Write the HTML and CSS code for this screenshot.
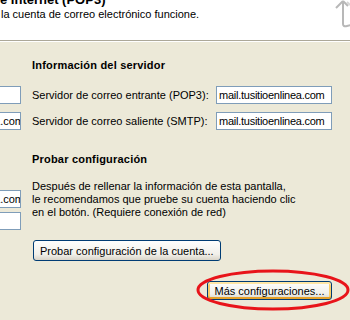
FILE: index.html
```html
<!DOCTYPE html>
<html lang="es">
<head>
<meta charset="utf-8">
<link rel="stylesheet" href="styles.css">
</head>
<body>
<div class="page">
  <header class="header">
    <div class="header-text">
      <div class="title">e Internet (POP3)</div>
      <div class="subtitle">la cuenta de correo electrónico funcione.</div>
    </div>
    <svg class="header-icon" width="18" height="28" viewBox="0 0 18 28">
      <path d="M10 1 L3 8 M10 1 L15 6 M10 1 L10 24 Q10 27 14 26 L18 25" fill="none" stroke="#b8b8b8" stroke-width="2"/>
      <path d="M14 2 L17 5" stroke="#d6d6d6" stroke-width="2"/>
    </svg>
  </header>
  <main class="main">
    <div class="left-col">
      <div class="group group-1">
        <div class="field field-left"></div>
        <div class="field field-left"><span class="clip-text">tusitioenlinea.com</span></div>
      </div>
      <div class="group group-2">
        <div class="field field-left"><span class="clip-text">tusitioenlinea.com</span></div>
        <div class="field field-left"></div>
      </div>
    </div>
    <div class="right-col">
      <h2 class="section-title">Información del servidor</h2>
      <div class="server-grid">
        <label class="label">Servidor de correo entrante (POP3):</label>
        <input class="field field-right" type="text" value="mail.tusitioenlinea.com">
        <label class="label">Servidor de correo saliente (SMTP):</label>
        <input class="field field-right" type="text" value="mail.tusitioenlinea.com">
      </div>
      <h2 class="section-title section-title-2">Probar configuración</h2>
      <p class="note">Después de rellenar la información de esta pantalla,<br>le recomendamos que pruebe su cuenta haciendo clic<br>en el botón. (Requiere conexión de red)</p>
      <div class="btn-row">
        <button class="btn">Probar configuración de la cuenta...</button>
      </div>
      <div class="btn-row btn-row-more">
        <button class="btn btn-default">Más configuraciones...</button>
        <svg class="highlight" width="156" height="44" viewBox="0 0 156 44">
          <ellipse cx="78" cy="21" rx="75" ry="19" fill="none" stroke="#e8141a" stroke-width="3"/>
        </svg>
      </div>
    </div>
  </main>
</div>
</body>
</html>
```
FILE: styles.css
```css
html, body {
  margin: 0;
  padding: 0;
}
body {
  width: 350px;
  height: 320px;
  overflow: hidden;
  background: #ece9d8;
  font-family: "Liberation Sans", Arial, sans-serif;
  font-size: 11px;
  color: #000;
}
.page {
  width: 350px;
  height: 320px;
  overflow: hidden;
}
.header {
  height: 40px;
  background: #fff;
  border-bottom: 1px solid #aca899;
  box-shadow: 0 1px 0 #fff;
  display: flex;
  justify-content: space-between;
  align-items: flex-start;
  overflow: hidden;
}
.title {
  font-weight: bold;
  font-size: 13px;
  line-height: 16px;
  margin-top: -8px;
}
.subtitle {
  line-height: 13px;
  margin-left: 1px;
}
.header-icon {
  display: block;
  margin-right: -1px;
}
.main {
  display: flex;
  gap: 11px;
}
.left-col {
  width: 21px;
  flex: none;
  display: flex;
  flex-direction: column;
}
.group {
  display: flex;
  flex-direction: column;
}
.group-1 {
  margin-top: 45px;
  gap: 8px;
}
.group-2 {
  margin-top: 60px;
  gap: 4px;
}
.field {
  box-sizing: border-box;
  height: 18px;
  border: 1px solid #7f9db9;
  background: #fff;
  font-family: "Liberation Sans", Arial, sans-serif;
  font-size: 11px;
  padding: 0 2px;
  margin: 0;
  color: #000;
  outline: none;
}
.field-left {
  width: 120px;
  margin-left: -99px;
  overflow: hidden;
  white-space: nowrap;
  text-align: right;
  line-height: 16px;
  padding: 0;
}
.clip-text {
  display: inline-block;
  margin-right: -4px;
}
.right-col {
  display: flex;
  flex-direction: column;
  flex: 1;
}
.section-title {
  font-size: 11px;
  font-weight: bold;
  line-height: 13px;
  margin: 18px 0 0 0;
  letter-spacing: 0.2px;
}
.section-title-2 {
  margin-top: 23px;
}
.server-grid {
  display: grid;
  grid-template-columns: 184px 116px;
  row-gap: 8px;
  align-items: center;
  margin-top: 14px;
}
.label {
  line-height: 13px;
}
.field-right {
  width: 116px;
  padding-left: 2px;
  letter-spacing: -0.25px;
}
.note {
  margin: 14px 0 0 0;
  line-height: 13px;
}
.btn-row {
  display: flex;
  margin-top: 21px;
}
.btn {
  box-sizing: border-box;
  height: 21px;
  padding: 0 6px;
  border: 1px solid #003c74;
  border-radius: 3px;
  background: linear-gradient(#fefefd, #f1f0ea 70%, #d9d4c8);
  font-family: "Liberation Sans", Arial, sans-serif;
  font-size: 11px;
  color: #000;
  margin-left: 1px;
}
.btn-row-more {
  position: relative;
  margin-top: 20px;
  padding-left: 174px;
}
.btn-default {
  width: 125px;
  height: 19px;
  box-shadow: inset 0 2px 0 #ffe7a6, inset 0 -2px 0 #e5a12a, inset 2px 0 0 #fbcf6a, inset -2px 0 0 #fbcf6a;
}
.highlight {
  position: absolute;
  left: 163px;
  top: -12px;
}
```
